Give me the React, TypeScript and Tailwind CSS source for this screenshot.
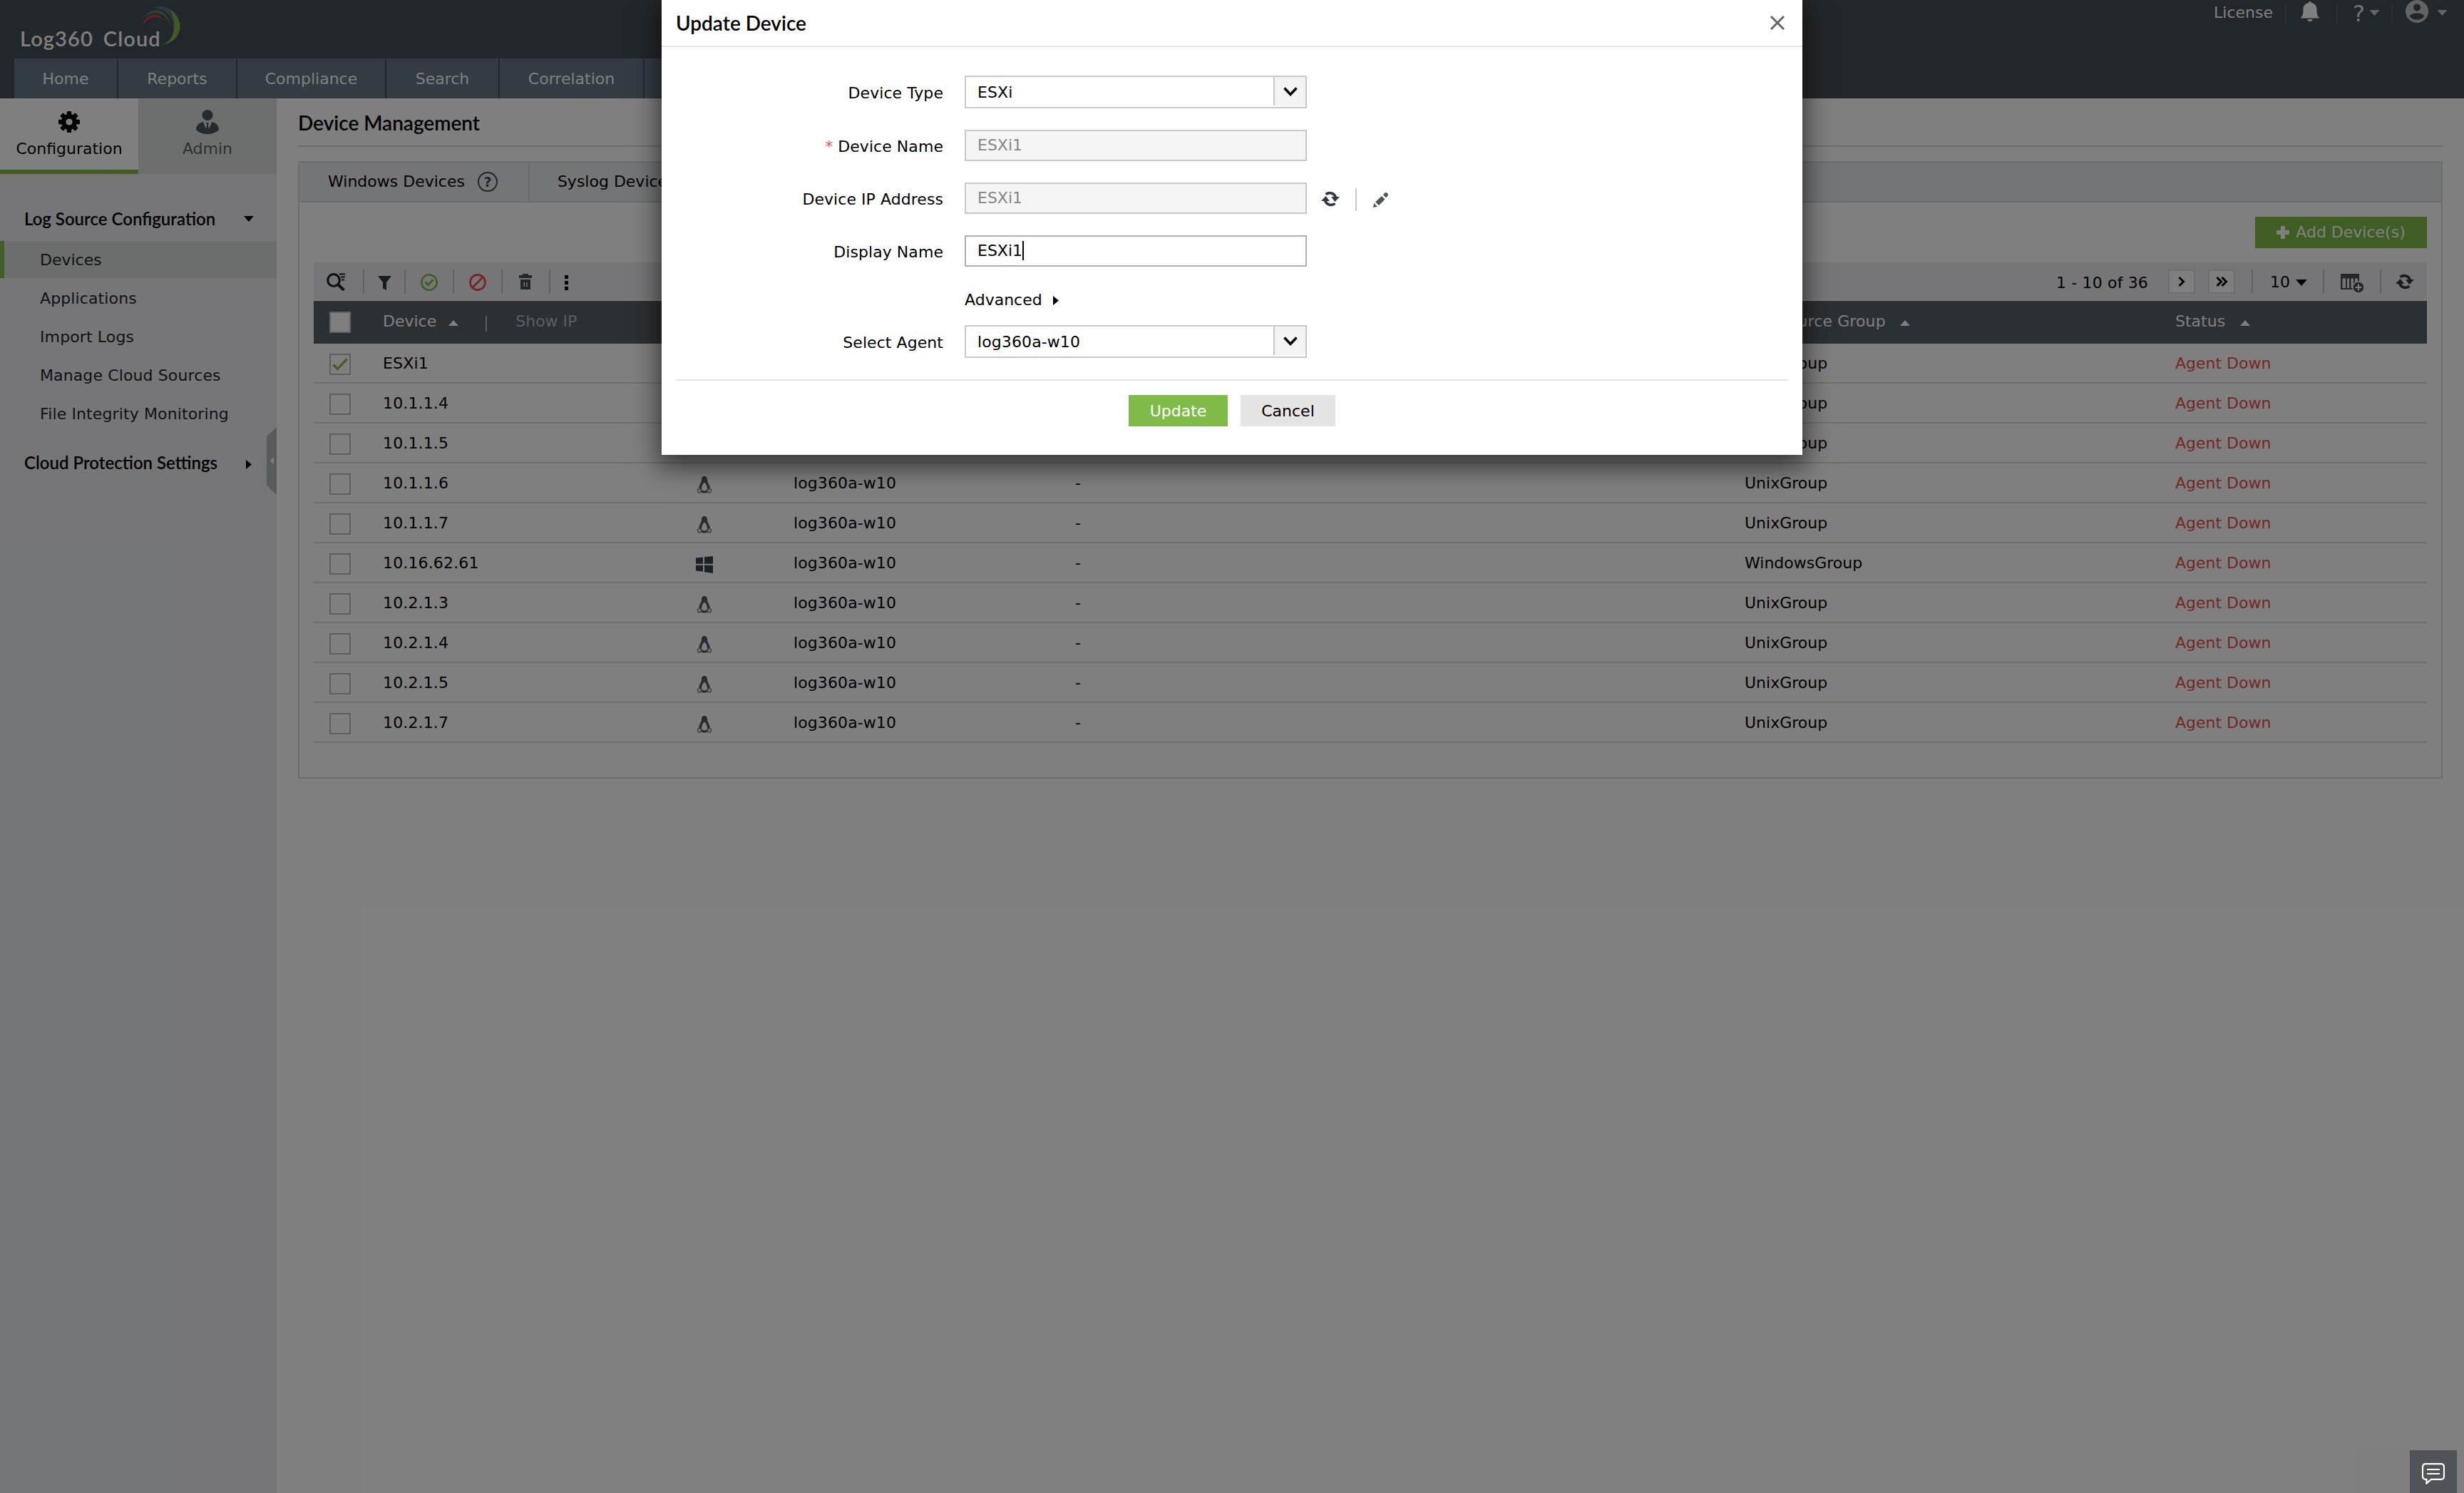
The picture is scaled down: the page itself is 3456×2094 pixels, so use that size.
import { ReactNode } from 'react'

type OsType = 'linux' | 'windows'

interface Device {
  name: string
  os: OsType
  group: string
  checked?: boolean
}

const NAV_TABS = [
  { label: 'Home', className: 'w-[146px]' },
  { label: 'Reports', className: 'w-[167px]' },
  { label: 'Compliance', className: 'w-[209px]' },
  { label: 'Search', className: 'w-[159px]' },
  { label: 'Correlation', className: 'w-[203px]' },
  { label: 'Alerts', className: 'w-[150px]' },
]

const SIDEBAR_LINKS = ['Applications', 'Import Logs', 'Manage Cloud Sources', 'File Integrity Monitoring']

const DEVICES: Device[] = [
  { name: 'ESXi1', os: 'linux', group: 'UnixGroup', checked: true },
  { name: '10.1.1.4', os: 'linux', group: 'UnixGroup' },
  { name: '10.1.1.5', os: 'linux', group: 'UnixGroup' },
  { name: '10.1.1.6', os: 'linux', group: 'UnixGroup' },
  { name: '10.1.1.7', os: 'linux', group: 'UnixGroup' },
  { name: '10.16.62.61', os: 'windows', group: 'WindowsGroup' },
  { name: '10.2.1.3', os: 'linux', group: 'UnixGroup' },
  { name: '10.2.1.4', os: 'linux', group: 'UnixGroup' },
  { name: '10.2.1.5', os: 'linux', group: 'UnixGroup' },
  { name: '10.2.1.7', os: 'linux', group: 'UnixGroup' },
]

const TABLE_COLS = 'grid grid-cols-[97px_439px_137px_395px_939px_604px_1fr] items-center'

/* ---------- icons ---------- */

function CaretDown({ className }: { className: string }) {
  return (
    <svg viewBox="0 0 16 9" className={className} fill="currentColor">
      <path d="M0 0h16L8 9z" />
    </svg>
  )
}

function CaretUp({ className }: { className: string }) {
  return (
    <svg viewBox="0 0 14 8" className={className} fill="currentColor">
      <path d="M0 8h14L7 0z" />
    </svg>
  )
}

function CaretRight({ className }: { className: string }) {
  return (
    <svg viewBox="0 0 8 13" className={className} fill="currentColor">
      <path d="M0 0v13l8-6.5z" />
    </svg>
  )
}

function GearIcon() {
  return (
    <svg viewBox="0 0 30 30" className="h-[30px] w-[30px]">
      <g fill="#000">
        {[0, 45, 90, 135].map((deg) => (
          <rect key={deg} x="11.8" y="0" width="6.4" height="30" rx="1.2" transform={`rotate(${deg} 15 15)`} />
        ))}
        <circle cx="15" cy="15" r="11" />
      </g>
      <circle cx="15" cy="15" r="4.6" fill="#fff" />
    </svg>
  )
}

function AdminIcon() {
  return (
    <svg viewBox="0 0 32 34" className="h-[34px] w-[32px]" fill="#4a545c">
      <ellipse cx="16" cy="7.5" rx="7.6" ry="7.5" />
      <path d="M10 17 14 27l1.2-6-1.2-3h4l-1.2 3 1.2 6 4-10c6 1 10 5 10 11-4 4-10 6-16 6S4 32 0 28c0-6 4-10 10-11z" />
    </svg>
  )
}

function RefreshIcon({ className }: { className: string }) {
  return (
    <svg viewBox="0 0 26 24" className={className}>
      <g fill="none" stroke="currentColor" strokeWidth="3.8">
        <path d="M6.6 5.6A8.6 8.6 0 0 1 20.4 10" />
        <path d="M19.4 18.4A8.6 8.6 0 0 1 5.6 14" />
      </g>
      <path d="M14 9h12l-6.6 7zM12 15H0l6.6-7z" fill="currentColor" />
    </svg>
  )
}

function LinuxIcon() {
  return (
    <svg viewBox="0 0 24 24" className="h-6 w-6">
      <path d="M12 0C9 0 8 2 8 5c0 4-4 7.500-4 13 0 3 3.500 5.500 8 5.500s8-2.500 8-5.500c0-5.500-4-9-4-13 0-3-1-5-4-5z" fill="#4c5964" />
      <path d="M12 8.500c-2.200 1.500-4 5-4 8.500 0 2 1.800 3.500 4 3.500s4-1.500 4-3.500c0-3.500-1.800-7-4-8.500z" fill="#fff" />
      <circle cx="5" cy="20.300" r="2.600" fill="#f0f0f0" stroke="#8a949c" strokeWidth="1.600" />
      <circle cx="19" cy="20.300" r="2.600" fill="#f0f0f0" stroke="#8a949c" strokeWidth="1.600" />
    </svg>
  )
}

function WindowsIcon() {
  return (
    <svg viewBox="0 0 24 24" className="h-6 w-6" fill="#36424c">
      <path d="M0 2.500 10 1.400v9.400H0zM12 1.200 24 0v10.800H12zM0 12.800h10v9L0 20.600zM12 12.800h12V24l-12-1.700z" />
    </svg>
  )
}

function LogoSwoosh() {
  return (
    <svg viewBox="0 0 58 56" className="absolute left-[198px] top-[9px] h-[56px] w-[58px]" fill="none">
      <path d="M1.500 28C5 11 22 6 36 21 24 11 10 13 1.500 28z" fill="#d8434a" />
      <path d="M3 17C12 0 36 0 42 27 35 9 16 4 3 17z" fill="#5d6d7e" />
      <path d="M9 10C19 2 34 4 41 23 33 9 21 5 9 10z" fill="#5d8a45" />
      <path d="M17 2C36-4 50 7 50 25c0 7-2 12-5 16 2-18-2-36-28-39z" fill="#5d6d7e" />
      <path d="M39 3c23 14 21 46-10 51 19-6 23-33 10-51z" fill="#86b04f" />
    </svg>
  )
}

function Checkbox({ checked, filled }: { checked?: boolean; filled?: boolean }) {
  return (
    <span className={`flex h-[30px] w-[30px] items-center justify-center border-2 ${filled ? 'border-[#c0c4c8] bg-white' : 'border-[#bdbdbd]'}`}>
      {checked && (
        <svg viewBox="0 0 22 18" className="h-[18px] w-[22px]" fill="none" stroke="#80bb49" strokeWidth="3.200">
          <path d="M1.500 9.500 7.500 15.500 20.500 1.500" />
        </svg>
      )}
    </span>
  )
}

function Divider({ className = 'bg-[#c4c6ca]' }: { className?: string }) {
  return <span className={`h-[34px] w-[2px] shrink-0 ${className}`} />
}

/* ---------- page ---------- */

function Header() {
  return (
    <header className="flex h-[138px] flex-col justify-between bg-[#444e56] text-white">
      <div className="flex h-[82px] justify-between">
        <div className="relative flex gap-[14px] pl-[28px] pt-[36px] font-['Lato'] text-[29px] font-semibold leading-[36px] tracking-[1.1px]">
          <span>Log360</span>
          <span>Cloud</span>
          <LogoSwoosh />
        </div>
        <div className="flex h-[36px] items-center pr-[23px]">
          <span className="mr-[17px]">License</span>
          <span className="h-[28px] w-[2px] bg-[#566068]" />
          <svg viewBox="0 0 26 28" className="ml-[20px] mr-[24px] mt-[-4px] h-[28px] w-[26px]" fill="#fff">
            <path d="M13 0c1.500 0 2 .8 2 2 5 1 7.500 4.500 7.500 9 0 6 .5 9 3.500 12v.5H0V23c3-3 3.500-6 3.500-12 0-4.500 2.500-8 7.500-9 0-1.200.5-2 2-2zM9.500 25h7a3.500 3 0 0 1-7 0z" />
          </svg>
          <span className="h-[28px] w-[2px] bg-[#566068]" />
          <span className="ml-[21px] mr-[6px] mt-[1px] text-[32px] leading-[34px] text-[#e4e4e4]">?</span>
          <CaretDown className="h-[8px] w-[15px] text-[#c8c8c8]" />
          <span className="ml-[16px] h-[28px] w-[2px] bg-[#566068]" />
          <svg viewBox="0 0 32 32" className="ml-[18px] mr-[12px] mt-[-4px] h-[32px] w-[32px]">
            <circle cx="16" cy="16" r="16" fill="#c4c6c8" />
            <circle cx="16" cy="10.500" r="5" fill="#444e56" />
            <path d="M5.500 22.500C9 17 23 17 26.500 22.500 22 29.500 10 29.500 5.500 22.500z" fill="#444e56" />
          </svg>
          <CaretDown className="h-[8px] w-[15px] text-[#c8c8c8]" />
        </div>
      </div>
      <nav className="flex h-[56px] pl-[20px]">
        {NAV_TABS.map((tab) => (
          <div key={tab.label} className={`flex items-center justify-center border-r-2 border-[#444e56] bg-[#667686] pt-[2px] ${tab.className}`}>
            {tab.label}
          </div>
        ))}
      </nav>
    </header>
  )
}

function Sidebar() {
  return (
    <aside className="relative w-[388px] shrink-0 bg-[#ecedf2] text-[#20262c]">
      <div className="flex h-[106px]">
        <div className="flex w-[194px] flex-col items-center border-b-[6px] border-[#80bb49] bg-white pt-[18px] text-black">
          <GearIcon />
          <span className="mt-[10px]">Configuration</span>
        </div>
        <div className="flex w-[194px] flex-col items-center bg-[#dadedc] pt-[16px] text-[#566068]">
          <AdminIcon />
          <span className="mt-[8px]">Admin</span>
        </div>
      </div>

      <div className="mt-[36px] flex h-[58px] items-center justify-between pb-[4px] pl-[34px] pr-[32px] font-['Lato'] text-[24px] font-semibold text-black">
        <span>Log Source Configuration</span>
        <CaretDown className="h-[8px] w-[14px]" />
      </div>
      <div className="flex h-[52px] items-center border-l-[6px] border-[#80bb49] bg-[#d8dcda] pl-[50px] pt-[1px]">Devices</div>
      <div className="flex flex-col pt-[2px] tracking-[0.12px]">
        {SIDEBAR_LINKS.map((link) => (
          <div key={link} className="flex h-[54px] items-center pl-[56px]">
            {link}
          </div>
        ))}
      </div>
      <div className="mt-[11px] flex h-[60px] items-center justify-between pl-[34px] pr-[35px] font-['Lato'] text-[24px] font-semibold text-black">
        <span>Cloud Protection Settings</span>
        <CaretRight className="mt-[4px] h-[13px] w-[8px]" />
      </div>

      {/* Collapse handle */}
      <svg viewBox="0 0 14 95" className="absolute right-0 top-[461px] h-[95px] w-[14px]">
        <path d="M14 0v95L0 82V13z" fill="#b2b4b8" />
        <path d="M10 42v10l-5-5z" fill="#fff" />
      </svg>
    </aside>
  )
}

function Toolbar() {
  return (
    <div className="flex h-[52px] items-center justify-between bg-[#ecedf0] pt-[2px] text-[#2e3840]">
      <div className="flex items-center pl-[18px]">
        <svg viewBox="0 0 26 25" className="mr-[25px] mt-[1px] h-[25px] w-[26px]" fill="none" stroke="#1c2228">
          <circle cx="10" cy="10" r="8.300" strokeWidth="3.200" />
          <path d="M16 16l8.500 8" strokeWidth="4" />
          <path d="M18 1.500h8M20 5.500h6M21 9.500h4" strokeWidth="2" />
        </svg>
        <Divider />
        <svg viewBox="0 0 19 20" className="ml-[19px] mr-[18px] mt-[4px] h-[20px] w-[19px]" fill="currentColor">
          <path d="M0 0h19l-7 9v11l-5-2.500V9z" />
        </svg>
        <Divider />
        <svg viewBox="0 0 24 24" className="mx-[21px] mt-[2px] h-6 w-6" fill="none" stroke="#80bb49">
          <circle cx="12" cy="12" r="10.700" strokeWidth="2.600" />
          <path d="M6.500 11.500l4 4 7-7.500" strokeWidth="3.200" />
        </svg>
        <Divider />
        <svg viewBox="0 0 24 24" className="mx-[21px] mt-[2px] h-6 w-6" fill="none" stroke="#ea4f4a" strokeWidth="2.800">
          <circle cx="12" cy="12" r="10.500" />
          <path d="M19 5 5 19" />
        </svg>
        <Divider />
        <svg viewBox="0 0 18 22" className="ml-[23px] mr-[24px] h-[22px] w-[18px]" fill="#444e56">
          <path fillRule="evenodd" d="M5 0h8v2h5v4H0V2h5zM2 8h14v14H2zM6.500 12v6H8v-6zM10 12v6h1.500v-6z" />
        </svg>
        <Divider />
        <div className="ml-[20px] mt-[2px] flex flex-col gap-[3px]">
          <span className="h-[5px] w-[5px] bg-black" />
          <span className="h-[5px] w-[5px] bg-black" />
          <span className="h-[5px] w-[5px] bg-black" />
        </div>
      </div>

      <div className="flex items-center pr-[18px] text-black">
        <span className="mr-[28px] mt-[3px] tracking-[0.15px]">1 - 10 of 36</span>
        <span className="mr-[18px] flex h-[34px] w-[38px] items-center justify-center border-2 border-[#dcdee0] bg-white">
          <svg viewBox="0 0 10 14" className="h-[14px] w-[10px]" fill="none" stroke="#000" strokeWidth="3">
            <path d="M1.500 1 7.500 7l-6 6" />
          </svg>
        </span>
        <span className="mr-[23px] flex h-[34px] w-[38px] items-center justify-center border-2 border-[#dcdee0] bg-white">
          <svg viewBox="0 0 17 14" className="h-[14px] w-[17px]" fill="none" stroke="#000" strokeWidth="3">
            <path d="M1.500 1 7.500 7l-6 6M8.500 1l6 6-6 6" />
          </svg>
        </span>
        <Divider />
        <span className="ml-[24px] mr-[8px] mt-[1px]">10</span>
        <CaretDown className="mr-[22px] mt-[2px] h-[9px] w-[16px]" />
        <Divider />
        <svg viewBox="0 0 33 27" className="ml-[23px] mr-[22px] mt-[4px] h-[27px] w-[33px]">
          <path fillRule="evenodd" d="M0 0h26v14h-2V6.500h-4V22H0zM2.500 6.500V20H7V6.500zM9 6.500V20h3V6.500zM14.500 6.500V20h3.500V6.500z" fill="#444e56" />
          <circle cx="25" cy="19" r="8" fill="#444e56" stroke="#ecedf0" strokeWidth="1.500" />
          <path d="M25 14.500v9M20.500 19h9" stroke="#fff" strokeWidth="2" />
        </svg>
        <Divider />
        <RefreshIcon className="ml-[20px] h-6 w-[26px] text-[#2e3840]" />
      </div>
    </div>
  )
}

function DeviceTable() {
  return (
    <div>
      <div className={`mt-[2px] h-[60px] bg-[#566068] pb-[3px] text-white ${TABLE_COLS}`}>
        <div className="pl-[22px] pt-[2px]">
          <Checkbox filled />
        </div>
        <div className="flex items-center">
          <span>Device</span>
          <CaretUp className="ml-[17px] mt-[4px] h-[8px] w-[14px]" />
          <span className="ml-[38px] mt-[6px] h-[22px] w-[2px] bg-[#b4b8bc]" />
          <span className="ml-[40px] text-[#b8bcc0]">Show IP</span>
        </div>
        <div />
        <div>Agent</div>
        <div>Last Message</div>
        <div className="flex items-center">
          <span className="tracking-[0.12px]">Log Source Group</span>
          <CaretUp className="ml-[20px] mt-[4px] h-[8px] w-[14px]" />
        </div>
        <div className="flex items-center">
          <span>Status</span>
          <CaretUp className="ml-[21px] mt-[4px] h-[8px] w-[14px]" />
        </div>
      </div>
      {DEVICES.map((device) => (
        <div key={device.name} className={`h-[56px] border-b-2 border-[#dedede] pt-[2px] ${TABLE_COLS}`}>
          <div className="pl-[22px] pt-[2px]">
            <Checkbox checked={device.checked} />
          </div>
          <div className="tracking-[0.15px]">{device.name}</div>
          <div className="pt-[4px]">{device.os === 'linux' ? <LinuxIcon /> : <WindowsIcon />}</div>
          <div className="tracking-[0.1px]">log360a-w10</div>
          <div>-</div>
          <div>{device.group}</div>
          <div className="text-[#ea4f4a]">Agent Down</div>
        </div>
      ))}
    </div>
  )
}

function DeviceManagement() {
  return (
    <main className="min-w-0 flex-1 pl-[30px] pr-[30px]">
      <h1 className="flex h-[68px] items-center border-b-2 border-[#dcdcdc] pt-[2px] font-['Lato'] text-[28px] font-semibold">Device Management</h1>

      <section className="mt-[20px] h-[866px] border-2 border-[#d8dadc]">
        <div className="flex h-[56px] border-b-2 border-[#d4d6d8] bg-[#e9ebee]">
          <div className="flex items-center gap-[18px] border-r-2 border-[#d4d6d8] pl-[40px] pr-[43px]">
            <span>Windows Devices</span>
            <span className="flex h-[28px] w-[28px] items-center justify-center rounded-full border-2 border-[#444e56] text-[19px] font-bold leading-none text-[#444e56]">
              ?
            </span>
          </div>
          <div className="flex items-center pl-[39px]">Syslog Devices</div>
        </div>

        <div className="px-[20px] pt-[20px]">
          <div className="mb-[20px] flex justify-end">
            <button className="flex h-[44px] w-[241px] items-center justify-center gap-[9px] bg-[#80bb49] text-white">
              <svg viewBox="0 0 18 18" className="h-[18px] w-[18px]" fill="#fff">
                <path d="M6 0h6v6h6v6h-6v6H6v-6H0V6h6z" />
              </svg>
              <span>Add Device(s)</span>
            </button>
          </div>
          <Toolbar />
          <DeviceTable />
        </div>
      </section>
    </main>
  )
}

/* ---------- dialog ---------- */

function FormRow({ label, required, className, children }: { label: string; required?: boolean; className: string; children: ReactNode }) {
  return (
    <div className={`flex items-center ${className}`}>
      <label className="mr-[30px] w-[395px] pt-[4px] text-right tracking-[0.06px]">
        {required && <span className="mr-[7px] text-[#f4524d]">*</span>}
        {label}
      </label>
      {children}
    </div>
  )
}

function SelectBox({ value }: { value: string }) {
  return (
    <div className="flex h-[46px] w-[480px] items-center justify-between border-2 border-[#c9c9c9] pl-[16px]">
      <span className="pt-[2px] tracking-[0.1px]">{value}</span>
      <span className="mb-[2px] flex h-[40px] w-[45px] items-center justify-center border-l-2 border-[#c9c9c9] bg-[#f3f3f3]">
        <svg viewBox="0 0 20 13" className="h-[13px] w-[20px]" fill="none" stroke="#000" strokeWidth="3.400">
          <path d="M1.500 1.500 10 10.500l8.500-9" />
        </svg>
      </span>
    </div>
  )
}

function UpdateDeviceDialog() {
  return (
    <div className="absolute left-[928px] top-0 h-[638px] w-[1600px] bg-white shadow-[0_12px_34px_4px_rgba(0,0,0,0.6)]">
      <div className="flex h-[66px] items-center justify-between border-b-2 border-[#e4e4e4] pl-[20px] pr-[25px]">
        <h2 className="font-['Lato'] text-[28px] font-semibold">Update Device</h2>
        <svg viewBox="0 0 20 20" className="h-[20px] w-[20px]" fill="none" stroke="#666" strokeWidth="3">
          <path d="M1 1l18 18M19 1 1 19" />
        </svg>
      </div>

      <div className="mx-[20px] h-[468px] border-b-2 border-[#e4e4e4] pt-[40px]">
        <div className="-ml-[20px] flex flex-col">
          <FormRow label="Device Type" className="h-[46px]">
            <SelectBox value="ESXi" />
          </FormRow>
          <FormRow label="Device Name" required className="mt-[30px] h-[44px]">
            <div className="flex h-[44px] w-[480px] items-center border-2 border-[#c9c9c9] bg-[#f5f5f5] pb-[1px] pl-[16px] text-[#868686]">ESXi1</div>
          </FormRow>
          <FormRow label="Device IP Address" className="mt-[30px] h-[44px]">
            <div className="flex h-[44px] w-[480px] items-center border-2 border-[#c9c9c9] bg-[#f5f5f5] pb-[1px] pl-[16px] text-[#868686]">ESXi1</div>
            <RefreshIcon className="ml-[20px] mt-[2px] h-6 w-[26px] text-[#2e3840]" />
            <span className="ml-[22px] mt-[3px] h-[32px] w-[2px] bg-[#c9c9c9]" />
            <svg viewBox="0 0 21 21" className="ml-[23px] mt-[4px] h-[21px] w-[21px]" fill="#505356">
              <path d="M0 21l1.200-6 4.800 4.800zM3 13.200 12 5l4.500 4.500-8.500 8.500zM14 3.300l2.500-2.700c.8-.8 2-.8 2.800 0l1.200 1.300c.7.700.7 1.800 0 2.600L18 7.300z" />
            </svg>
          </FormRow>
          <FormRow label="Display Name" className="mt-[30px] h-[44px]">
            <div className="flex h-[44px] w-[480px] items-center border-2 border-[#b0b0b0] bg-white pb-[1px] pl-[16px]">
              <span>ESXi1</span>
              <span className="h-[27px] w-[2px] bg-black" />
            </div>
          </FormRow>
          <div className="flex h-[82px] items-center pb-[1px] pl-[425px] pt-[13px]">
            <span>Advanced</span>
            <CaretRight className="ml-[15px] h-[13px] w-[8px]" />
          </div>
          <FormRow label="Select Agent" className="h-[46px]">
            <SelectBox value="log360a-w10" />
          </FormRow>
        </div>
      </div>

      <div className="flex gap-[18px] pl-[655px] pt-[20px]">
        <button className="h-[44px] w-[139px] bg-[#80bb49] pt-[1px] text-white">Update</button>
        <button className="h-[44px] w-[133px] bg-[#e5e5e4] pt-[1px]">Cancel</button>
      </div>
    </div>
  )
}

export default function App() {
  return (
    <div className="relative flex h-[2094px] w-[3456px] flex-col overflow-hidden bg-white font-['DejaVu_Sans',sans-serif] text-[22px] leading-[26px] text-black">
      <Header />
      <div className="flex flex-1">
        <Sidebar />
        <DeviceManagement />
      </div>

      {/* Backdrop */}
      <div className="absolute inset-0 bg-black/50" />

      <UpdateDeviceDialog />

      {/* Chat launcher */}
      <div className="absolute bottom-0 right-[10px] flex h-[60px] w-[66px] justify-center bg-[#505357] pt-[18px]">
        <svg viewBox="0 0 32 30" className="h-[30px] w-[32px]" fill="none" stroke="#fff" strokeWidth="2.200">
          <path d="M5 1.200h22a4 4 0 0 1 4 4v13.600a4 4 0 0 1-4 4H13l-6.500 5.600v-5.600H5a4 4 0 0 1-4-4V5.200a4 4 0 0 1 4-4z" />
          <path d="M7 9h18M7 15h18" />
        </svg>
      </div>
    </div>
  )
}
